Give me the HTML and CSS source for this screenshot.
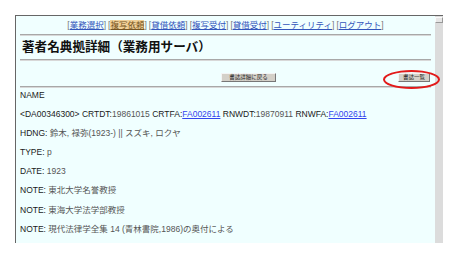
FILE: index.html
```html
<!DOCTYPE html>
<html lang="ja">
<head>
    <meta charset="UTF-8">
    <title>著者名典拠詳細</title>
    <link rel="stylesheet" href="styles.css">
</head>
<body>
    <div class="panel">
        <div class="content">
            <div class="nav">
                <span class="item">[<a href="#">業務選択</a>]</span>
                <span class="item">[<a href="#" class="current">複写依頼</a>]</span>
                <span class="item">[<a href="#">貸借依頼</a>]</span>
                <span class="item">[<a href="#">複写受付</a>]</span>
                <span class="item">[<a href="#">貸借受付</a>]</span>
                <span class="item">[<a href="#">ユーティリティ</a>]</span>
                <span class="item">[<a href="#">ログアウト</a>]</span>
            </div>
            <div class="rule"></div>
            <h1 class="title">著者名典拠詳細（業務用サーバ）</h1>
            <div class="rule"></div>
            <div class="buttons">
                <button class="btn">書誌詳細に戻る</button>
                <span class="marked">
                    <button class="btn">書誌一覧</button>
                    <span class="circle"></span>
                </span>
            </div>
            <div class="rule"></div>
            <div class="rows">
                <div class="row"><span class="label">NAME</span></div>
                <div class="row"><span class="label">&lt;DA00346300&gt; CRTDT:</span><span class="val">19861015</span> <span class="label">CRTFA:</span><a href="#">FA002611</a> <span class="label">RNWDT:</span><span class="val">19870911</span> <span class="label">RNWFA:</span><a href="#">FA002611</a></div>
                <div class="row"><span class="label">HDNG:</span> <span class="val">鈴木, 禄弥(1923-) || スズキ, ロクヤ</span></div>
                <div class="row"><span class="label">TYPE:</span> <span class="val">p</span></div>
                <div class="row"><span class="label">DATE:</span> <span class="val">1923</span></div>
                <div class="row"><span class="label">NOTE:</span> <span class="val">東北大学名誉教授</span></div>
                <div class="row"><span class="label">NOTE:</span> <span class="val">東海大学法学部教授</span></div>
                <div class="row"><span class="label">NOTE:</span> <span class="val">現代法律学全集 14 (青林書院,1986)の奥付による</span></div>
            </div>
        </div>
        <div class="scrollbar">
            <div class="arrow"></div>
        </div>
    </div>
</body>
</html>
```

FILE: styles.css
```css
body {
    margin: 0;
    padding: 15px 0 0 15px;
    background-color: #fff;
    font-family: "Liberation Sans", "Noto Sans CJK JP", sans-serif;
}

.panel {
    display: flex;
    width: 427px;
    height: 227px;
    background-color: #f0ffff;
    border-top: 1px solid #666;
    border-left: 1px solid #666;
}

.content {
    flex: 1;
    padding: 0 4px;
}

.nav {
    display: flex;
    justify-content: center;
    gap: 2px;
    padding-top: 3px;
    font-size: 8.5px;
    line-height: 12px;
    color: #777;
}

.nav a {
    color: #3355bb;
}

.nav a.current {
    background-color: #f0d098;
    color: #775522;
}

.rule {
    height: 1px;
    border-bottom: 1px solid #d8d8d8;
    background-color: #a8a8a8;
}

.nav + .rule {
    margin-top: 3px;
}

.title {
    margin: 2px 0 3px 2px;
    font-size: 12.6px;
    line-height: 18px;
    font-weight: bold;
    color: #111;
}

.buttons {
    display: flex;
    justify-content: flex-end;
    align-items: flex-start;
    gap: 122px;
    height: 9px;
    padding: 12px 1px 4px 0;
}

.btn {
    display: block;
    height: 9px;
    padding: 0 4px;
    font-family: "Noto Sans CJK JP", sans-serif;
    font-size: 5.5px;
    line-height: 7px;
    color: #222;
    background-color: #d4d0c8;
    border: 1px solid;
    border-color: #f4f4f4 #777 #777 #f4f4f4;
}

.buttons > .btn {
    width: 55px;
}

.marked .btn {
    width: 32px;
}

.marked {
    position: relative;
    display: flex;
}

.circle {
    position: absolute;
    left: -15px;
    top: -3px;
    width: 57px;
    height: 19px;
    box-sizing: border-box;
    border: 2px solid #e21a1a;
    border-radius: 50%;
}

.rows {
    display: flex;
    flex-direction: column;
    gap: 7.2px;
    padding-top: 0.5px;
    font-size: 8.5px;
    line-height: 12px;
}

.label {
    color: #1a1a1a;
}

.val {
    color: #555;
}

.rows a {
    color: #3344ee;
}

.scrollbar {
    width: 8px;
    background-color: #dcdcdc;
}

.arrow {
    height: 6px;
    margin-top: 1px;
    background-color: #e6e6e6;
    border: 1px solid;
    border-color: #fafafa #999 #999 #fafafa;
    box-sizing: border-box;
}
```
